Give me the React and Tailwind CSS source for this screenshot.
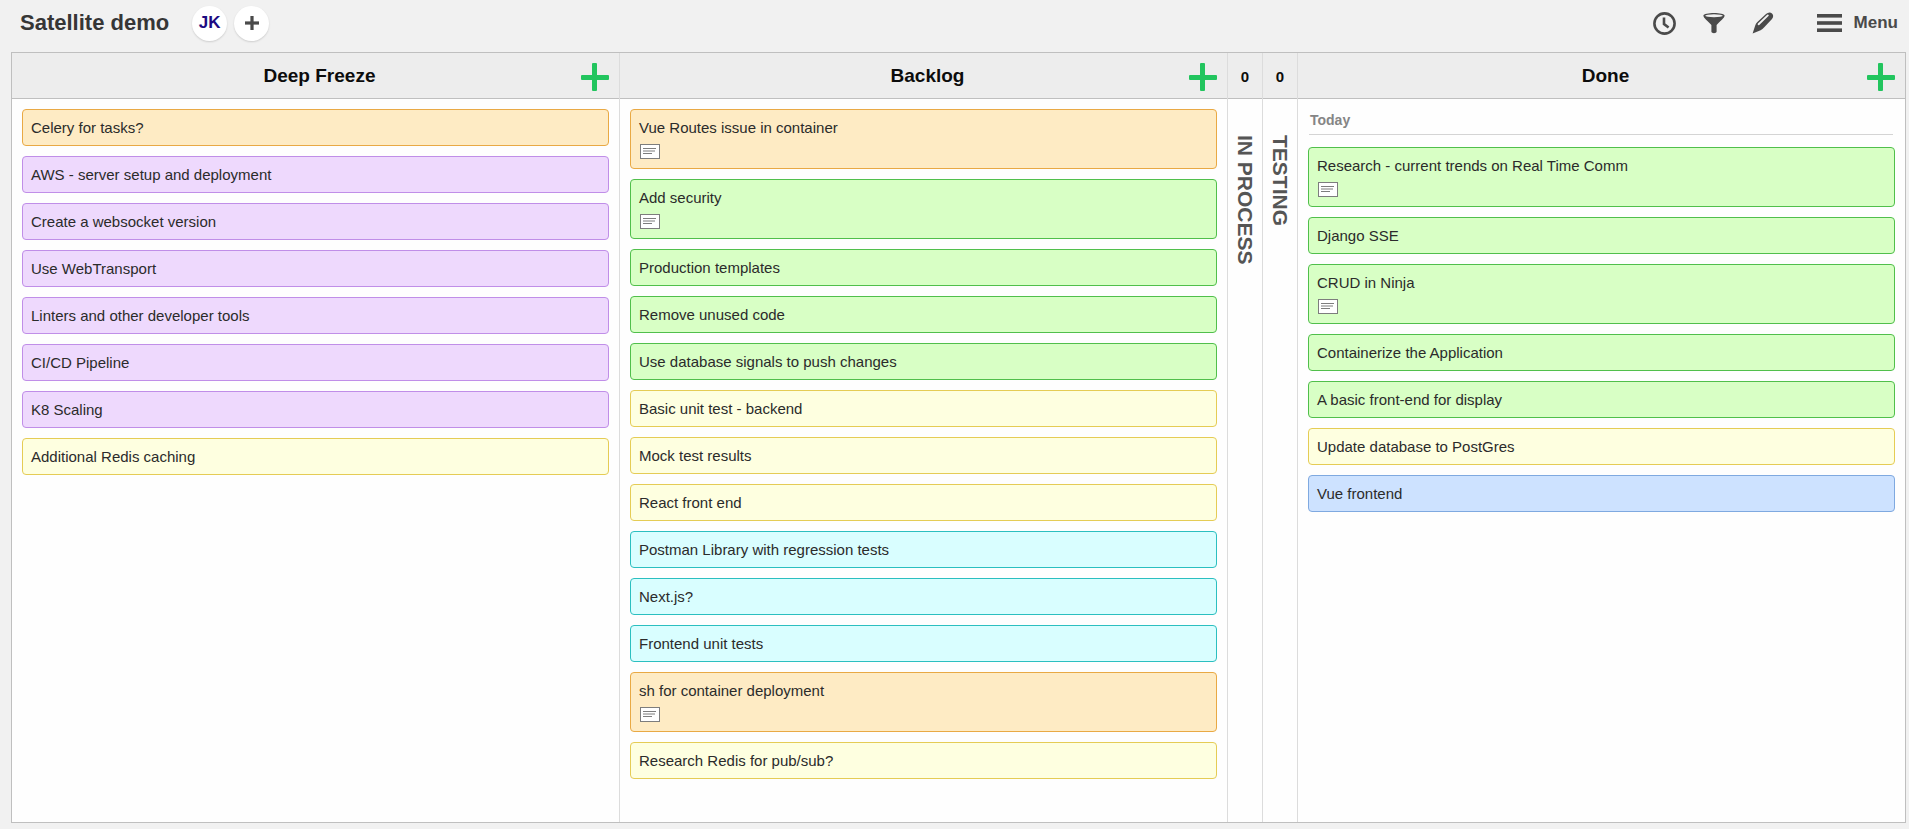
const tones = {
  orange: "bg-[#feebc4] border-[#e9a944]",
  purple: "bg-[#eed9fd] border-[#c08ee8]",
  yellow: "bg-[#feffe0] border-[#e5cc55]",
  green: "bg-[#d8ffc5] border-[#50bf4b]",
  cyan: "bg-[#d9feff] border-[#2bbfc0]",
  blue: "bg-[#cde2ff] border-[#7fa9e0]",
};

const deepFreeze = [
  { title: "Celery for tasks?", tone: "orange" },
  { title: "AWS - server setup and deployment", tone: "purple" },
  { title: "Create a websocket version", tone: "purple" },
  { title: "Use WebTransport", tone: "purple" },
  { title: "Linters and other developer tools", tone: "purple" },
  { title: "CI/CD Pipeline", tone: "purple" },
  { title: "K8 Scaling", tone: "purple" },
  { title: "Additional Redis caching", tone: "yellow" },
];

const backlog = [
  { title: "Vue Routes issue in container", tone: "orange", note: true },
  { title: "Add security", tone: "green", note: true },
  { title: "Production templates", tone: "green" },
  { title: "Remove unused code", tone: "green" },
  { title: "Use database signals to push changes", tone: "green" },
  { title: "Basic unit test - backend", tone: "yellow" },
  { title: "Mock test results", tone: "yellow" },
  { title: "React front end", tone: "yellow" },
  { title: "Postman Library with regression tests", tone: "cyan" },
  { title: "Next.js?", tone: "cyan" },
  { title: "Frontend unit tests", tone: "cyan" },
  { title: "sh for container deployment", tone: "orange", note: true },
  { title: "Research Redis for pub/sub?", tone: "yellow" },
];

const done = [
  { title: "Research - current trends on Real Time Comm", tone: "green", note: true },
  { title: "Django SSE", tone: "green" },
  { title: "CRUD in Ninja", tone: "green", note: true },
  { title: "Containerize the Application", tone: "green" },
  { title: "A basic front-end for display", tone: "green" },
  { title: "Update database to PostGres", tone: "yellow" },
  { title: "Vue frontend", tone: "blue" },
];

function NoteIcon() {
  return (
    <svg className="mt-1.5 block" width="21" height="15" viewBox="0 0 21 15" aria-hidden="true">
      <rect x="1.5" y="0.5" width="19" height="14" fill="#fff" stroke="#7d7d7d" />
      <path d="M4 4.5H17M4 7H16M4 9.5H13" stroke="#7d7d7d" strokeWidth="1" />
    </svg>
  );
}

function Card({ title, tone, note }) {
  return (
    <li className={`rounded border px-2 pt-2 text-[15px] leading-5 text-[#2b2b2b] ${note ? "pb-[9px]" : "pb-[7px]"} ${tones[tone]}`}>
      {title}
      {note && <NoteIcon />}
    </li>
  );
}

function CardList({ cards }) {
  return (
    <ul className="flex flex-col gap-2.5">
      {cards.map((card) => (
        <Card key={card.title} {...card} />
      ))}
    </ul>
  );
}

function Column({ title, children, last }) {
  return (
    <section className={`flex min-w-0 flex-1 flex-col ${last ? "" : "border-r border-[#dcdcdc]"}`}>
      <header className="flex h-[46px] items-center border-b border-[#bfbfbf] bg-[#ededed] pr-2.5 pl-[46px]">
        <h2 className="flex-1 text-center text-[19px] leading-6 font-bold text-[#0c0c0c]">{title}</h2>
        <button type="button" aria-label={`Add card to ${title}`} className="pt-0.5">
          <svg className="block" width="28" height="28" viewBox="0 0 28 28" fill="#22c55e" aria-hidden="true">
            <rect x="0" y="12" width="28" height="5" rx="1" />
            <rect x="11" y="0" width="5" height="28" rx="1" />
          </svg>
        </button>
      </header>
      <div className="flex-1 p-2.5">{children}</div>
    </section>
  );
}

function CollapsedColumn({ title, count }) {
  return (
    <section className="flex w-[35px] shrink-0 flex-col border-r border-[#dcdcdc]">
      <header className="flex h-[46px] items-center justify-center border-b border-[#bfbfbf] bg-[#ededed] pt-1 text-[15px] font-bold text-[#0c0c0c]">
        {count}
      </header>
      <h2 className="flex flex-1 items-center pt-9 text-[21px] leading-[34px] font-bold text-[#555] uppercase [writing-mode:vertical-rl]">
        <span className="h-full">{title}</span>
      </h2>
    </section>
  );
}

export default function App() {
  return (
    <div className="flex min-h-screen flex-col bg-[#f1f1f1] pr-[3px] pb-1.5 pl-[11px] font-['Liberation_Sans',Arial,sans-serif]">
      <header className="flex h-[52px] items-center pr-2 pb-1.5 pl-[9px] text-[#4a4a4a]">
        <h1 className="text-[22px] leading-7 font-bold text-[#363636]">Satellite demo</h1>
        <div className="ml-[23px] flex gap-[7px]">
          <button type="button" className="flex size-[35px] items-center justify-center rounded-full bg-white text-[17px] font-bold text-[#1c0a82] shadow-[0_1px_2px_rgba(0,0,0,0.15)]">
            JK
          </button>
          <button type="button" aria-label="Add member" className="flex size-[35px] items-center justify-center rounded-full bg-white shadow-[0_1px_2px_rgba(0,0,0,0.15)]">
            <svg width="14" height="14" viewBox="0 0 14 14" fill="#4a4a4a" aria-hidden="true">
              <rect x="0" y="5.4" width="14" height="3.2" />
              <rect x="5.4" y="0" width="3.2" height="14" />
            </svg>
          </button>
        </div>
        <nav className="ml-auto flex items-center">
          <button type="button" aria-label="History" className="mr-[27px]">
            <svg className="block" width="23" height="23" viewBox="0 0 23 23" fill="none" stroke="#4a4a4a" aria-hidden="true">
              <circle cx="11.5" cy="11.5" r="10.1" strokeWidth="2.6" />
              <path d="M11 5.4V12L15.6 15.6" strokeWidth="2.6" />
            </svg>
          </button>
          <button type="button" aria-label="Filter" className="mr-[27px]">
            <svg className="block" width="22" height="22" viewBox="0 0 22 22" aria-hidden="true">
              <path d="M0.4 3.6C0.4 0 21.6 0 21.6 3.6C21.6 5.4 20 6.8 13.6 13V19.8C13.6 21.6 8.4 21.6 8.4 19.8V13C2 6.8 0.4 5.4 0.4 3.6Z" fill="#4a4a4a" />
              <ellipse cx="11" cy="3.7" rx="8.8" ry="1.5" fill="#f1f1f1" />
            </svg>
          </button>
          <button type="button" aria-label="Edit" className="mr-[43px]">
            <svg className="block" width="22" height="22" viewBox="0 0 22 22" aria-hidden="true">
              <path d="M0.6 21.4L3.2 13.4C3.6 12 4.4 11 5.4 10L14 2C16 0.2 18.4 0 20 1.4C21.6 2.8 21.6 5 20 7L12 15.6C11 16.6 10 17.6 8.6 18.2Z" fill="#4a4a4a" />
              <path d="M6.6 12.2L15.8 3.4" stroke="#f1f1f1" strokeWidth="1.9" strokeLinecap="round" />
            </svg>
          </button>
          <button type="button" className="flex items-center gap-3 text-[17px] leading-6 font-bold">
            <svg width="25" height="18" viewBox="0 0 25 18" fill="#4a4a4a" aria-hidden="true">
              <rect width="25" height="3.6" />
              <rect y="7.2" width="25" height="3.6" />
              <rect y="14.4" width="25" height="3.6" />
            </svg>
            Menu
          </button>
        </nav>
      </header>

      <main className="flex flex-1 border border-[#bfbfbf] bg-[#fefefe]">
        <Column title="Deep Freeze">
          <CardList cards={deepFreeze} />
        </Column>
        <Column title="Backlog">
          <CardList cards={backlog} />
        </Column>
        <CollapsedColumn title="In process" count={0} />
        <CollapsedColumn title="Testing" count={0} />
        <Column title="Done" last>
          <h3 className="mr-0.5 mb-3 ml-px border-b border-[#d4d4d4] pt-px pb-1 pl-px text-[14px] leading-5 font-bold text-[#858585]">Today</h3>
          <CardList cards={done} />
        </Column>
      </main>
    </div>
  );
}
